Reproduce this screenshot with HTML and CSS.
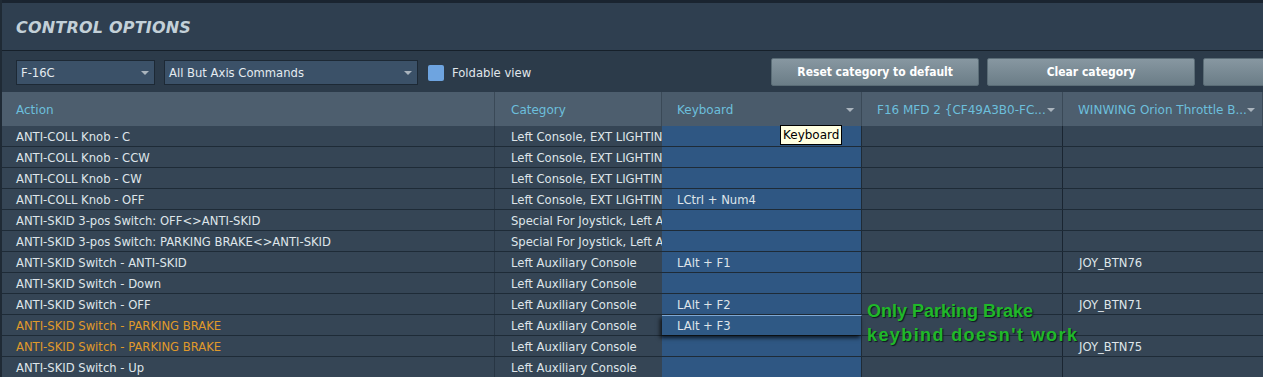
FILE: index.html
```html
<!DOCTYPE html>
<html>
<head>
<meta charset="utf-8">
<link rel="stylesheet" href="styles.css">
</head>
<body>
<div class="app">
  <div class="topstrip"></div>
  <div class="header"><h1 class="title">CONTROL OPTIONS</h1></div>
  <div class="toolbar">
    <div class="select sel-plane"><span>F-16C</span><span class="arrow"></span></div>
    <div class="select sel-cat"><span>All But Axis Commands</span><span class="arrow"></span></div>
    <label class="check"><span class="box"></span><span>Foldable view</span></label>
    <div class="buttons">
      <button class="btn">Reset category to default</button>
      <button class="btn">Clear category</button>
      <button class="btn btn-cut"></button>
    </div>
  </div>
  <div class="table">
    <div class="thead">
      <div class="th c-action">Action</div>
      <div class="th c-cat">Category</div>
      <div class="th c-kb"><span>Keyboard</span><span class="arrow"></span></div>
      <div class="th c-mfd"><span>F16 MFD 2 {CF49A3B0-FC...</span><span class="arrow"></span></div>
      <div class="th c-ww"><span>WINWING Orion Throttle B...</span><span class="arrow"></span></div>
    </div>
    <div class="tbody">
      <div class="row"><div class="td c-action">ANTI-COLL Knob - C</div><div class="td c-cat">Left Console, EXT LIGHTING</div><div class="td c-kb"></div><div class="td c-mfd"></div><div class="td c-ww"></div></div>
      <div class="row"><div class="td c-action">ANTI-COLL Knob - CCW</div><div class="td c-cat">Left Console, EXT LIGHTING</div><div class="td c-kb"></div><div class="td c-mfd"></div><div class="td c-ww"></div></div>
      <div class="row"><div class="td c-action">ANTI-COLL Knob - CW</div><div class="td c-cat">Left Console, EXT LIGHTING</div><div class="td c-kb"></div><div class="td c-mfd"></div><div class="td c-ww"></div></div>
      <div class="row"><div class="td c-action">ANTI-COLL Knob - OFF</div><div class="td c-cat">Left Console, EXT LIGHTING</div><div class="td c-kb">LCtrl + Num4</div><div class="td c-mfd"></div><div class="td c-ww"></div></div>
      <div class="row"><div class="td c-action">ANTI-SKID 3-pos Switch: OFF&lt;&gt;ANTI-SKID</div><div class="td c-cat">Special For Joystick, Left Auxiliary Console</div><div class="td c-kb"></div><div class="td c-mfd"></div><div class="td c-ww"></div></div>
      <div class="row"><div class="td c-action">ANTI-SKID 3-pos Switch: PARKING BRAKE&lt;&gt;ANTI-SKID</div><div class="td c-cat">Special For Joystick, Left Auxiliary Console</div><div class="td c-kb"></div><div class="td c-mfd"></div><div class="td c-ww"></div></div>
      <div class="row"><div class="td c-action">ANTI-SKID Switch - ANTI-SKID</div><div class="td c-cat">Left Auxiliary Console</div><div class="td c-kb">LAlt + F1</div><div class="td c-mfd"></div><div class="td c-ww">JOY_BTN76</div></div>
      <div class="row"><div class="td c-action">ANTI-SKID Switch - Down</div><div class="td c-cat">Left Auxiliary Console</div><div class="td c-kb"></div><div class="td c-mfd"></div><div class="td c-ww"></div></div>
      <div class="row"><div class="td c-action">ANTI-SKID Switch - OFF</div><div class="td c-cat">Left Auxiliary Console</div><div class="td c-kb">LAlt + F2</div><div class="td c-mfd"></div><div class="td c-ww">JOY_BTN71</div></div>
      <div class="row"><div class="td c-action warn">ANTI-SKID Switch - PARKING BRAKE</div><div class="td c-cat">Left Auxiliary Console</div><div class="td c-kb selected">LAlt + F3</div><div class="td c-mfd"></div><div class="td c-ww"></div></div>
      <div class="row"><div class="td c-action warn">ANTI-SKID Switch - PARKING BRAKE</div><div class="td c-cat">Left Auxiliary Console</div><div class="td c-kb"></div><div class="td c-mfd"></div><div class="td c-ww">JOY_BTN75</div></div>
      <div class="row"><div class="td c-action">ANTI-SKID Switch - Up</div><div class="td c-cat">Left Auxiliary Console</div><div class="td c-kb"></div><div class="td c-mfd"></div><div class="td c-ww"></div></div>
    </div>
    <div class="tooltip">Keyboard</div>
    <div class="note"><span class="l1">Only Parking Brake</span><br><span class="l2">keybind doesn't work</span></div>
  </div>
</div>
</body>
</html>
```
FILE: styles.css
```css
* { box-sizing: border-box; }
html, body { margin: 0; padding: 0; }
body {
  width: 1263px;
  height: 377px;
  overflow: hidden;
  background: #2f3e4d;
  font-family: "DejaVu Sans", "Liberation Sans", sans-serif;
  font-size: 11.6px;
  color: #dfe5ea;
}
.app { display: flex; flex-direction: column; height: 377px; border-left: 2px solid #1f2a35; overflow: hidden; }
.topstrip { height: 3px; background: #1a2430; flex: none; }
.header {
  height: 48px;
  flex: none;
  background: #2f3f50;
  border-bottom: 1px solid #16202a;
  display: flex;
  align-items: center;
  padding-left: 14px;
  padding-top: 2px;
}
.title {
  margin: 0;
  font-family: "DejaVu Sans", sans-serif;
  font-weight: bold;
  font-style: italic;
  font-size: 16px;
  color: #c3d0d8;
  letter-spacing: 0.2px;
}
.toolbar {
  height: 41px;
  flex: none;
  background: #2c3b4a;
  display: flex;
  align-items: center;
  padding-left: 14px;
  padding-top: 2px;
  overflow: hidden;
}
.select {
  flex: none;
  height: 25px;
  background: #3b5168;
  border: 1px solid #1d2935;
  display: flex;
  align-items: center;
  justify-content: space-between;
  padding: 0 5px 0 4px;
  color: #e4ebf0;
}
.sel-plane { width: 139px; margin-right: 9px; }
.sel-cat { width: 254px; margin-right: 10px; }
.arrow {
  flex: none;
  width: 0; height: 0;
  border-left: 4px solid transparent;
  border-right: 4px solid transparent;
  border-top: 4px solid #aab4bd;
}
.check { flex: none; display: flex; align-items: center; color: #e0e6eb; }
.box {
  width: 16px; height: 16px;
  background: #6ea4e0;
  border-radius: 2px;
  margin-right: 8px;
}
.buttons { flex: none; display: flex; gap: 8px; margin-left: 240px; margin-top: -2px; }
.btn {
  flex: none;
  width: 208px;
  height: 28px;
  border: 1px solid #5a6c76;
  border-radius: 2px;
  background: linear-gradient(#8797a1, #6b7d87);
  color: #ffffff;
  font-family: "DejaVu Sans Condensed", "DejaVu Sans", sans-serif;
  font-weight: bold;
  font-size: 12px;
  padding: 0;
}
.table { position: relative; flex: 1; display: flex; flex-direction: column; margin-left: -2px; }
.thead {
  height: 34px;
  flex: none;
  display: grid;
  grid-template-columns: 495px 167px 200px 201px 200px;
  background: #4d5e6e;
}
.th {
  display: flex;
  align-items: center;
  justify-content: space-between;
  white-space: nowrap;
  overflow: hidden;
  color: #6cbfdc;
  font-size: 12px;
  padding: 2px 7px 0 16px;
  border-right: 1px solid #3a4957;
}
.th.c-mfd, .th.c-ww { padding-left: 15px; }
.th.c-kb { background: #4a5b6b; padding-left: 15px; }
.tbody { flex: 1; background: #354555; }
.row {
  height: 21px;
  display: grid;
  grid-template-columns: 495px 167px 200px 201px 200px;
  border-bottom: 1px solid #1e2b37;
}
.td {
  white-space: nowrap;
  overflow: hidden;
  padding-left: 16px;
  padding-top: 1px;
  display: flex;
  align-items: center;
  color: #dfe5ea;
}
.td.c-action { border-right: 1px solid #283644; }
.td.c-kb { background: #2f5783; padding-left: 15px; border-right: 1px solid #1e2b37; }
.td.c-mfd { border-right: 1px solid #1a2531; }
.warn { color: #e09a2a; }
.td.selected {
  position: relative;
  background: #2f5985;
  border-top: 1px solid #7ea8d4;
  box-shadow: -2px 3px 4px rgba(0,0,0,0.7);
  z-index: 2;
}
.tooltip {
  position: absolute;
  left: 780px;
  top: 33px;
  background: #ffffe1;
  border: 1px solid #000;
  color: #000;
  font-size: 12px;
  padding: 1px 2px;
  line-height: 16px;
  z-index: 5;
}
.note {
  position: absolute;
  left: 867px;
  top: 207px;
  color: #1fb82a;
  font-family: "Liberation Sans", Arial, sans-serif;
  font-weight: bold;
  font-size: 18px;
  line-height: 24px;
  text-shadow: 1px 1px 1px #10181f;
  z-index: 6;
}
.l2 { letter-spacing: 1.4px; }
```
